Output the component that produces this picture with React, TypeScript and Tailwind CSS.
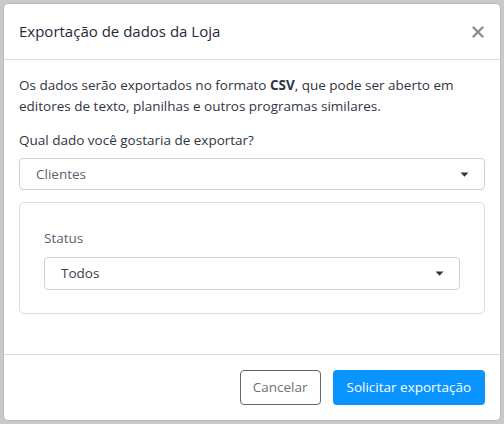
import React from "react";

const Caret = () => (
  <svg width="9" height="5" viewBox="0 0 9 5" className="shrink-0">
    <path d="M0.5 0.5 L8.5 0.5 L4.5 4.8 Z" fill="#2f3540" />
  </svg>
);

export default function App() {
  return (
    <div
      className="w-[504px] h-[424px] bg-[#c9c9c9] p-[3px] overflow-hidden"
      style={{ fontFamily: '"Open Sans", "Noto Sans", sans-serif' }}
    >
      <div className="w-[498px] h-[418px] bg-white rounded-[5px] border border-[#b9b9b9] flex flex-col">
        <div className="h-[56px] flex items-center justify-between px-[15px] border-b border-[#d9d9d9] shrink-0">
          <span className="text-[15px] font-medium text-[#232b3b]">Exportação de dados da Loja</span>
          <svg width="12" height="12" viewBox="0 0 12 12" className="mr-[1px]">
            <path d="M1.5 1.5 L10.5 10.5 M10.5 1.5 L1.5 10.5" stroke="#8a8d92" strokeWidth="2.4" strokeLinecap="round" />
          </svg>
        </div>
        <div className="flex-1 px-[15px] pt-[15px] text-[13.5px] leading-[21px] text-[#2f3542]">
          <p>
            Os dados serão exportados no formato <b className="font-bold">CSV</b>, que pode ser aberto em editores de texto, planilhas e outros programas similares.
          </p>
          <p className="mt-[13px]">Qual dado você gostaria de exportar?</p>
          <div className="mt-[7px] h-[32px] border border-[#ced2da] rounded-[4px] flex items-center justify-between pl-[16px] pr-[15px] text-[#5b6270]">
            <span>Clientes</span>
            <Caret />
          </div>
          <div className="mt-[12px] h-[112px] border border-[#d8dbe0] rounded-[5px] px-[24px] pt-[25px]">
            <p className="text-[#5b6270]">Status</p>
            <div className="mt-[8px] h-[33px] border border-[#ced2da] rounded-[4px] flex items-center justify-between pl-[16px] pr-[15px] text-[#3a404c]">
              <span>Todos</span>
              <Caret />
            </div>
          </div>
        </div>
        <div className="h-[66px] border-t border-[#d9d9d9] flex items-center justify-end gap-[12px] px-[15px] shrink-0">
          <button className="h-[35px] px-[12px] border border-[#5f6572] rounded-[4px] text-[13.5px] text-[#6c717b] bg-white">
            Cancelar
          </button>
          <button className="h-[35px] px-[14px] rounded-[4px] text-[13.5px] text-white bg-[#0a94ff]">
            Solicitar exportação
          </button>
        </div>
      </div>
    </div>
  );
}
